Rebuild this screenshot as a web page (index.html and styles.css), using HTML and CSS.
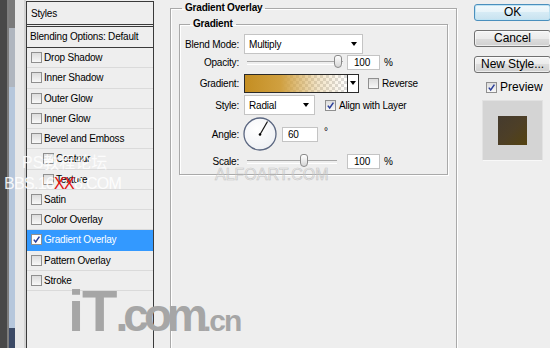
FILE: index.html
```html
<!DOCTYPE html>
<html lang="en">
<head>
  <meta charset="UTF-8" />
  <title>Layer Style - Gradient Overlay</title>
  <link rel="stylesheet" href="styles.css">
</head>
<body>
  <div class="desk">
    <div class="desk-dark"></div>
    <div class="desk-edge"></div>
    <div class="desk-blue"></div>
    <div class="desk-light"></div>
  </div>

  <div class="styles">
    <div class="styles-head">Styles</div>
    <div class="styles-blend">Blending Options: Default</div>
    <ul class="style-list">
      <li class="style-item"><span class="check"></span>Drop Shadow</li>
      <li class="style-item"><span class="check"></span>Inner Shadow</li>
      <li class="style-item"><span class="check"></span>Outer Glow</li>
      <li class="style-item"><span class="check"></span>Inner Glow</li>
      <li class="style-item"><span class="check"></span>Bevel and Emboss</li>
      <li class="style-item sub"><span class="check"></span>Contour</li>
      <li class="style-item sub"><span class="check"></span>Texture</li>
      <li class="style-item"><span class="check"></span>Satin</li>
      <li class="style-item"><span class="check"></span>Color Overlay</li>
      <li class="style-item active">
        <span class="check">
          <svg viewBox="0 0 9 9" width="9" height="9"><path d="M1.8 4.6 L3.7 7 L7.4 1.6" stroke="#2b3f9a" stroke-width="1.5" fill="none"/></svg>
        </span>Gradient Overlay
      </li>
      <li class="style-item"><span class="check"></span>Pattern Overlay</li>
      <li class="style-item"><span class="check"></span>Stroke</li>
    </ul>
  </div>

  <div class="main">
    <fieldset class="group outer">
      <legend>Gradient Overlay</legend>
      <fieldset class="group inner">
        <legend>Gradient</legend>
        <div class="rows">
          <div class="row">
            <span class="lbl">Blend Mode:</span>
            <div class="select blend">Multiply<span class="arrow"></span></div>
          </div>

          <div class="row r-small">
            <span class="lbl">Opacity:</span>
            <div class="slider opacity"><span class="thumb" style="left: 91px"></span></div>
            <div class="num">100</div>
            <span class="unit">%</span>
          </div>

          <div class="row r-grad">
            <span class="lbl">Gradient:</span>
            <div class="grad"></div>
            <div class="grad-btn"><span class="arrow"></span></div>
            <span class="check reverse"></span>
            <span class="opt">Reverse</span>
          </div>

          <div class="row r-style">
            <span class="lbl">Style:</span>
            <div class="select radial">Radial<span class="arrow"></span></div>
            <span class="check align">
              <svg viewBox="0 0 9 9" width="9" height="9"><path d="M1.8 4.6 L3.7 7 L7.4 1.6" stroke="#2b3f9a" stroke-width="1.5" fill="none"/></svg>
            </span>
            <span class="opt">Align with Layer</span>
          </div>

          <div class="row r-angle">
            <span class="lbl">Angle:</span>
            <svg class="dial" width="34" height="34" viewBox="0 0 34 34">
              <defs>
                <radialGradient id="dialFill" cx="0.4" cy="0.35" r="0.7">
                  <stop offset="0" stop-color="#ffffff"/>
                  <stop offset="1" stop-color="#eef0f4"/>
                </radialGradient>
              </defs>
              <circle cx="17" cy="17" r="16" fill="url(#dialFill)" stroke="#5a6680" stroke-width="1.3"/>
              <line x1="17" y1="17.5" x2="24.5" y2="4.5" stroke="#111" stroke-width="1.2"/>
              <circle cx="17" cy="17.5" r="1.3" fill="#000"/>
            </svg>
            <div class="num angle">60</div>
            <span class="unit deg">°</span>
          </div>

          <div class="row r-small r-scale">
            <span class="lbl">Scale:</span>
            <div class="slider scale"><span class="thumb" style="left: 57px"></span></div>
            <div class="num">100</div>
            <span class="unit">%</span>
          </div>
        </div>
      </fieldset>
    </fieldset>
  </div>

  <div class="side">
    <button class="btn ok">OK</button>
    <button class="btn">Cancel</button>
    <button class="btn last">New Style...</button>
    <div class="preview">
      <span class="check">
        <svg viewBox="0 0 9 9" width="9" height="9"><path d="M1.8 4.6 L3.7 7 L7.4 1.6" stroke="#2b3f9a" stroke-width="1.5" fill="none"/></svg>
      </span>Preview
    </div>
    <div class="swatch-box"><div class="swatch"></div></div>
  </div>

  <!-- watermarks laid over the screenshot -->
  <div class="wm wm-ps">PS教程论坛</div>
  <div class="wm wm-bbs">BBS.16<span class="red">XX</span>8.COM</div>
  <div class="wm wm-alfo">ALFOART.COM</div>
  <div class="wm wm-logo"><span class="logo-it">iT</span><span class="logo-com">.com</span><span class="logo-cn">.cn</span></div>
</body>
</html>
```

FILE: styles.css
```css
* {
  box-sizing: border-box;
}

body {
  margin: 0;
  width: 550px;
  height: 348px;
  overflow: hidden;
  position: relative;
  display: flex;
  background: #eeeeee;
  color: #000;
  font-family: "Liberation Sans", Arial, sans-serif;
  font-size: 10px;
  letter-spacing: -0.2px;
}

/* desktop strip on the left */
.desk {
  display: flex;
  width: 26px;
  flex: none;
}

.desk-dark {
  width: 7px;
  background: #484848;
}

.desk-edge {
  width: 2px;
  background: #7d7d7d;
}

.desk-blue {
  width: 6px;
  background: linear-gradient(to bottom, #7a7a7a 0 28px, #b0b6bf 28px 87px, #b6c7dc 87px 328px, #3c4a66 328px);
}

.desk-light {
  width: 11px;
  background: linear-gradient(to right, #e8e8e8 0 9px, #d2d2d2 9px);
}

/* styles list */
.styles {
  width: 128px;
  height: 347px;
  flex: none;
  margin-top: 1px;
  border: 1px solid #3a3a3a;
  border-bottom: none;
  background: #eeeeee;
}

.styles-head {
  height: 25px;
  line-height: 23px;
  padding-left: 4px;
  border-bottom: 3px double #3a3a3a;
}

.styles-blend {
  height: 21px;
  line-height: 20px;
  padding-left: 3px;
  border-bottom: 1px solid #3a3a3a;
}

.style-list {
  list-style: none;
  margin: 0;
  padding: 0;
}

.style-item {
  display: flex;
  align-items: center;
  height: 20.25px;
  padding-left: 4px;
  border-bottom: 1px solid #dadada;
}

.style-item.sub {
  padding-left: 16px;
}

.style-item.active {
  background: #3399ff;
  color: #fff;
  border-bottom-color: #3399ff;
}

.check {
  width: 11px;
  height: 11px;
  flex: none;
  margin-right: 2px;
  border: 1px solid #8f8f8f;
  background: linear-gradient(#dcdcdc, #f8f8f8);
  display: flex;
  align-items: center;
  justify-content: center;
}

.check svg {
  display: block;
}

.active .check {
  background: #fff;
}

/* main panel */
.main {
  margin-left: 16px;
  width: 287px;
  flex: none;
}

.group {
  margin: 0;
  min-width: 0;
  border: 1px solid #a9a9a9;
  box-shadow: inset 1px 1px 0 #fff, 1px 1px 0 #fff;
}

.group legend {
  font-weight: bold;
  line-height: 16px;
  padding: 0 3px;
}

.outer {
  height: 348px;
  padding: 0 8px;
  border-bottom: none;
}

.outer > legend {
  margin-left: 3px;
}

.inner {
  padding: 0 0 5px;
}

.inner > legend {
  margin-left: 10px;
}

.rows {
  padding-top: 2px;
}

.row {
  display: flex;
  align-items: center;
  height: 20px;
}

.r-small {
  height: 16px;
}

.r-grad {
  margin-top: 3px;
}

.r-style {
  margin-top: 2px;
}

.r-angle {
  margin-top: 2px;
  height: 34px;
}

.r-scale {
  margin-top: 2px;
}

.lbl {
  width: 59px;
  flex: none;
  margin-right: 5px;
  text-align: right;
}

.select {
  height: 20px;
  display: flex;
  align-items: center;
  padding-left: 4px;
  background: #fff;
  border: 1px solid #c4c4c4;
}

.select.blend {
  width: 119px;
}

.select.radial {
  width: 71px;
}

.arrow {
  margin-left: auto;
  margin-right: 5px;
  border-left: 3.5px solid transparent;
  border-right: 3.5px solid transparent;
  border-top: 4px solid #000;
}

.slider {
  position: relative;
  height: 16px;
  margin-left: 3px;
}

.slider::before {
  content: "";
  position: absolute;
  left: 0;
  right: 0;
  top: 7px;
  height: 2px;
  border-top: 1px solid #a8a8a8;
  border-bottom: 1px solid #fff;
}

.slider.opacity {
  width: 96px;
}

.slider.scale {
  width: 90px;
}

.thumb {
  position: absolute;
  top: 1px;
  width: 8px;
  height: 13px;
  margin-left: -4px;
  border: 1px solid #8a8a8a;
  border-radius: 3px 3px 4px 4px;
  background: linear-gradient(#ffffff, #d6d6d6);
}

.num {
  width: 33px;
  height: 15px;
  margin-left: 4px;
  padding-left: 6px;
  line-height: 13px;
  background: #fff;
  border: 1px solid #c4c4c4;
}

.r-scale .num {
  margin-left: 10px;
}

.num.angle {
  width: 36px;
  margin-left: 5px;
  padding-left: 5px;
}

.unit {
  margin-left: 4px;
}

.unit.deg {
  margin-left: 6px;
  margin-bottom: 6px;
}

.grad {
  width: 104px;
  height: 19px;
  border: 1px solid #2a2a2a;
  background:
    linear-gradient(to right, #c48e22 0%, #d0a040 35%, rgba(214, 170, 80, 0.35) 70%, rgba(214, 170, 80, 0) 100%),
    linear-gradient(45deg, #dcdcdc 25%, transparent 25%, transparent 75%, #dcdcdc 75%),
    linear-gradient(45deg, #dcdcdc 25%, #ffffff 25%, #ffffff 75%, #dcdcdc 75%);
  background-size: 100% 100%, 6px 6px, 6px 6px;
  background-position: 0 0, 0 0, 3px 3px;
}

.grad-btn {
  width: 11px;
  height: 19px;
  display: flex;
  align-items: center;
  border: 1px solid #2a2a2a;
  border-left: none;
  background: #fff;
}

.grad-btn .arrow {
  margin: 0 auto;
}

.check.reverse {
  margin-left: 9px;
}

.check.align {
  margin-left: 10px;
}

.opt {
  margin-left: 1px;
}

.dial {
  margin-left: -1px;
  flex: none;
}

/* buttons on the right */
.side {
  margin-left: 17px;
  width: 77px;
  flex: none;
  display: flex;
  flex-direction: column;
  align-items: flex-start;
  padding-top: 4px;
}

.btn {
  width: 77px;
  height: 17px;
  margin: 0 0 9px;
  padding: 0;
  font-family: "Liberation Sans", Arial, sans-serif;
  font-size: 12px;
  letter-spacing: -0.1px;
  line-height: 15px;
  color: #000;
  border: 1px solid #707070;
  border-radius: 3px;
  background: linear-gradient(#f4f4f4 0%, #ebebeb 50%, #dddddd 50%, #d0d0d0 100%);
  box-shadow: inset 0 0 0 1px rgba(255, 255, 255, 0.6);
}

.btn.ok {
  border-color: #4b8fbd;
  background: linear-gradient(#f2f9fc 0%, #e6f3f9 50%, #d6ebf5 50%, #c8e2ef 100%);
  box-shadow: inset 0 0 0 1px #bfe3f3;
}

.btn.last {
  margin-bottom: 6px;
}

.preview {
  display: flex;
  align-items: center;
  height: 16px;
  margin-left: 12px;
  font-size: 12px;
  letter-spacing: 0;
}

.preview .check {
  margin-right: 3px;
}

.swatch-box {
  width: 61px;
  height: 61px;
  margin: 5px 0 0 8px;
  display: flex;
  align-items: center;
  justify-content: center;
  background: #d4d4d4;
  border: 1px solid #e2e2e2;
  border-bottom-color: #f8f8f8;
}

.swatch {
  width: 29px;
  height: 29px;
  background: linear-gradient(135deg, #453b2e 0%, #4d3f27 50%, #554310 100%);
}

/* watermarks */
.wm {
  position: absolute;
  white-space: nowrap;
  letter-spacing: 0;
}

.wm-ps {
  left: 22px;
  top: 149px;
  font-size: 16px;
  font-family: "Liberation Sans", "Noto Sans CJK SC", sans-serif;
  color: rgba(255, 255, 255, 0.85);
}

.wm-bbs {
  left: 4px;
  top: 175px;
  font-size: 16px;
  letter-spacing: -0.7px;
  color: rgba(255, 255, 255, 0.9);
}

.wm-bbs .red {
  color: #e01010;
}

.wm-alfo {
  left: 215px;
  top: 166px;
  font-size: 16px;
  color: transparent;
  -webkit-text-stroke: 0.6px #c4c4c4;
}

.wm-logo {
  left: 68px;
  top: 282px;
  line-height: 1;
  font-weight: bold;
  color: #a6a6a6;
}

.logo-it {
  font-size: 58px;
  letter-spacing: -2px;
}

.logo-com {
  font-size: 46px;
  letter-spacing: -5px;
}

.logo-cn {
  font-size: 30px;
  letter-spacing: -2px;
}
```
